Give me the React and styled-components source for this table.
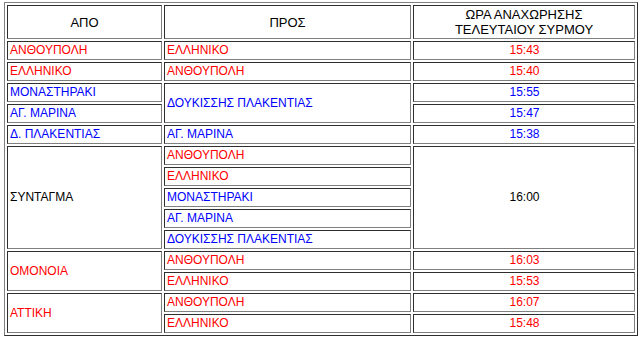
import React from "react";
import styled, { createGlobalStyle } from "styled-components";

const GlobalStyle = createGlobalStyle`
  html, body {
    margin: 0;
    padding: 0;
    background: #ffffff;
  }
  body {
    font-family: "Liberation Sans", Arial, sans-serif;
  }
`;

const Table = styled.table`
  margin: 2px 0 0 4px;
  width: 634px;
  table-layout: fixed;
  border-collapse: separate;
  border-spacing: 2px;
  border-style: solid;
  border-width: 1px;
  border-color: #808080 #2e2e2e #2e2e2e #808080;
  font-size: 12px;
  line-height: 15px;
`;

const Head = styled.th`
  box-sizing: border-box;
  width: ${({ $w }) => $w}px;
  padding: 1px;
  font-size: 13px;
  font-weight: normal;
  color: #000000;
  text-align: center;
  vertical-align: middle;
  border-style: solid;
  border-width: 1px;
  border-color: #2e2e2e #808080 #808080 #2e2e2e;
`;

const Cell = styled.td`
  box-sizing: border-box;
  height: 19px;
  padding: 1px 1px 1px 2px;
  white-space: nowrap;
  color: ${({ $c }) => $c || "#000000"};
  text-align: ${({ $center }) => ($center ? "center" : "left")};
  vertical-align: middle;
  border-style: solid;
  border-width: 1px;
  border-color: #2e2e2e #808080 #808080 #2e2e2e;
`;

const RED = "#ff0000";
const BLUE = "#0000ff";

const App = () => {
  return (
    <>
      <GlobalStyle />
      <Table>
        <thead>
          <tr>
            <Head $w={155}>ΑΠΟ</Head>
            <Head $w={247}>ΠΡΟΣ</Head>
            <Head $w={222}>
              ΩΡΑ ΑΝΑΧΩΡΗΣΗΣ
              <br />
              ΤΕΛΕΥΤΑΙΟΥ ΣΥΡΜΟΥ
            </Head>
          </tr>
        </thead>
        <tbody>
          <tr>
            <Cell $c={RED}>ΑΝΘΟΥΠΟΛΗ</Cell>
            <Cell $c={RED}>ΕΛΛΗΝΙΚΟ</Cell>
            <Cell $c={RED} $center>15:43</Cell>
          </tr>
          <tr>
            <Cell $c={RED}>ΕΛΛΗΝΙΚΟ</Cell>
            <Cell $c={RED}>ΑΝΘΟΥΠΟΛΗ</Cell>
            <Cell $c={RED} $center>15:40</Cell>
          </tr>
          <tr>
            <Cell $c={BLUE}>ΜΟΝΑΣΤΗΡΑΚΙ</Cell>
            <Cell $c={BLUE} rowSpan={2}>ΔΟΥΚΙΣΣΗΣ ΠΛΑΚΕΝΤΙΑΣ</Cell>
            <Cell $c={BLUE} $center>15:55</Cell>
          </tr>
          <tr>
            <Cell $c={BLUE}>ΑΓ. ΜΑΡΙΝΑ</Cell>
            <Cell $c={BLUE} $center>15:47</Cell>
          </tr>
          <tr>
            <Cell $c={BLUE}>Δ. ΠΛΑΚΕΝΤΙΑΣ</Cell>
            <Cell $c={BLUE}>ΑΓ. ΜΑΡΙΝΑ</Cell>
            <Cell $c={BLUE} $center>15:38</Cell>
          </tr>
          <tr>
            <Cell rowSpan={5}>ΣΥΝΤΑΓΜΑ</Cell>
            <Cell $c={RED}>ΑΝΘΟΥΠΟΛΗ</Cell>
            <Cell rowSpan={5} $center>16:00</Cell>
          </tr>
          <tr>
            <Cell $c={RED}>ΕΛΛΗΝΙΚΟ</Cell>
          </tr>
          <tr>
            <Cell $c={BLUE}>ΜΟΝΑΣΤΗΡΑΚΙ</Cell>
          </tr>
          <tr>
            <Cell $c={BLUE}>ΑΓ. ΜΑΡΙΝΑ</Cell>
          </tr>
          <tr>
            <Cell $c={BLUE}>ΔΟΥΚΙΣΣΗΣ ΠΛΑΚΕΝΤΙΑΣ</Cell>
          </tr>
          <tr>
            <Cell $c={RED} rowSpan={2}>ΟΜΟΝΟΙΑ</Cell>
            <Cell $c={RED}>ΑΝΘΟΥΠΟΛΗ</Cell>
            <Cell $c={RED} $center>16:03</Cell>
          </tr>
          <tr>
            <Cell $c={RED}>ΕΛΛΗΝΙΚΟ</Cell>
            <Cell $c={RED} $center>15:53</Cell>
          </tr>
          <tr>
            <Cell $c={RED} rowSpan={2}>ΑΤΤΙΚΗ</Cell>
            <Cell $c={RED}>ΑΝΘΟΥΠΟΛΗ</Cell>
            <Cell $c={RED} $center>16:07</Cell>
          </tr>
          <tr>
            <Cell $c={RED}>ΕΛΛΗΝΙΚΟ</Cell>
            <Cell $c={RED} $center>15:48</Cell>
          </tr>
        </tbody>
      </Table>
    </>
  );
};

export default App;
